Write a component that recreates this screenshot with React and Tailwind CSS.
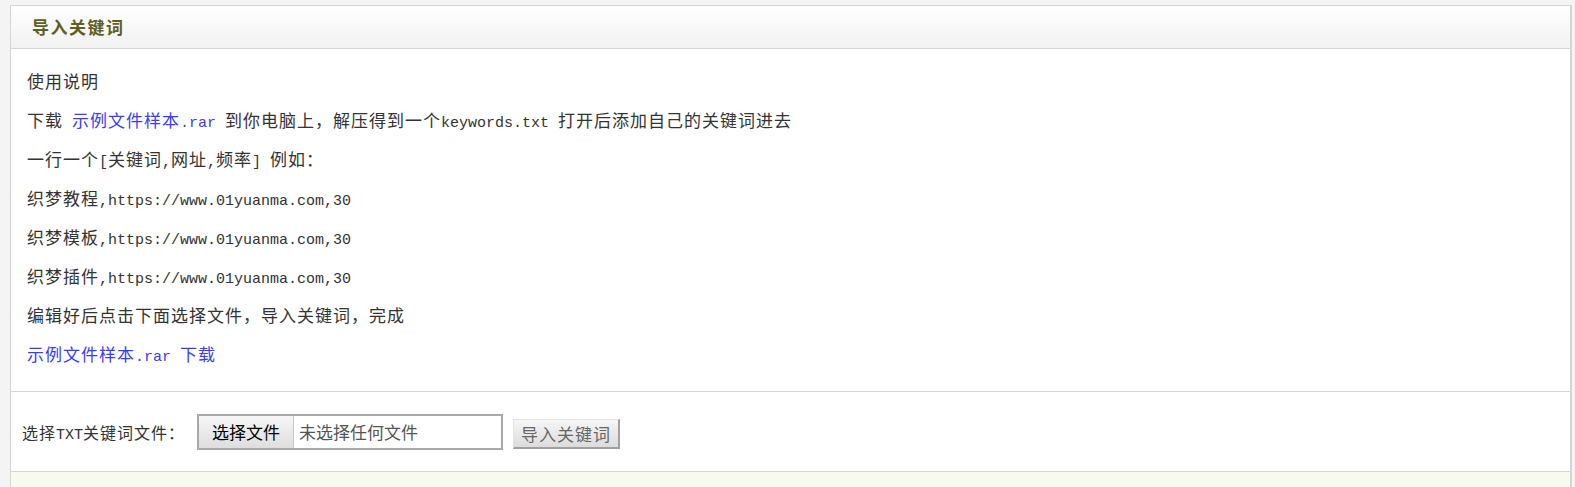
import React from "react"

const M = ({ children }) => (
  <span className="font-['Liberation_Mono',monospace] text-[15px] leading-none tracking-normal">{children}</span>
)

const lines = [
  ["织梦教程"],
  ["织梦模板"],
  ["织梦插件"],
]

export default function App () {
  return (
    <div className="min-h-screen bg-[#f4f4f4] pt-[5px] pl-[10px] pr-[3px] font-['Noto_Sans_CJK_SC',sans-serif] text-[#333]">
      <div className="border border-b-0 border-[#d5d5d5] border-r-2 bg-white">
        <div className="h-[43px] flex items-center px-[21px] bg-gradient-to-b from-white to-[#f1f1f1] border-b border-[#d5d5d5]">
          <h2 className="text-[17px] font-bold text-[#5f5f22] tracking-[1.5px]">导入关键词</h2>
        </div>

        <div className="px-[16px] pt-[12px] pb-[18px] text-[17px] tracking-[1px]">
          <p className="h-[39px] leading-[39px]">使用说明</p>
          <p className="h-[39px] leading-[39px]">
            下载<M> </M><a href="#" className="text-[#3b3bff]">示例文件样本<M>.rar</M></a><M> </M>到你电脑上，解压得到一个<M>keywords.txt </M>打开后添加自己的关键词进去
          </p>
          <p className="h-[39px] leading-[39px]">
            一行一个<M>[</M>关键词<M>,</M>网址<M>,</M>频率<M>] </M>例如：
          </p>
          {lines.map(([name]) => (
            <p key={name} className="h-[39px] leading-[39px]">
              {name}<M>,https://www.01yuanma.com,30</M>
            </p>
          ))}
          <p className="h-[39px] leading-[39px]">编辑好后点击下面选择文件，导入关键词，完成</p>
          <p className="h-[39px] leading-[39px]">
            <a href="#" className="text-[#3b3bff]">示例文件样本<M>.rar </M>下载</a>
          </p>
        </div>

        <div className="h-[80px] border-t border-[#d5d5d5] flex items-center pl-[11px]">
          <span className="text-[16px] tracking-[1px]">选择<M>TXT</M>关键词文件：</span>
          <label className="ml-[12px] w-[306px] h-[36px] border-2 border-[#a9a9a9] flex items-stretch cursor-pointer">
            <input type="file" className="hidden" />
            <span className="w-[95px] flex items-center justify-center text-[17px] text-black bg-gradient-to-b from-[#f7f7f7] to-[#dedede] border-r border-[#c8c8c8]">选择文件</span>
            <span className="flex items-center pl-[5px] text-[17px] text-[#555]">未选择任何文件</span>
          </label>
          <button className="ml-[10px] mt-[5px] w-[107px] h-[30px] text-[17px] text-[#666] tracking-[1px] bg-gradient-to-b from-[#f6f6f6] to-[#dcdcdc] border border-t-[#e4e4e4] border-l-[#e4e4e4] border-r-2 border-b-2 border-r-[#a0a0a0] border-b-[#a0a0a0]">
            导入关键词
          </button>
        </div>

        <div className="h-[16px] border-t border-[#d5d5d5] bg-[#f9faee]" />
      </div>
    </div>
  )
}
